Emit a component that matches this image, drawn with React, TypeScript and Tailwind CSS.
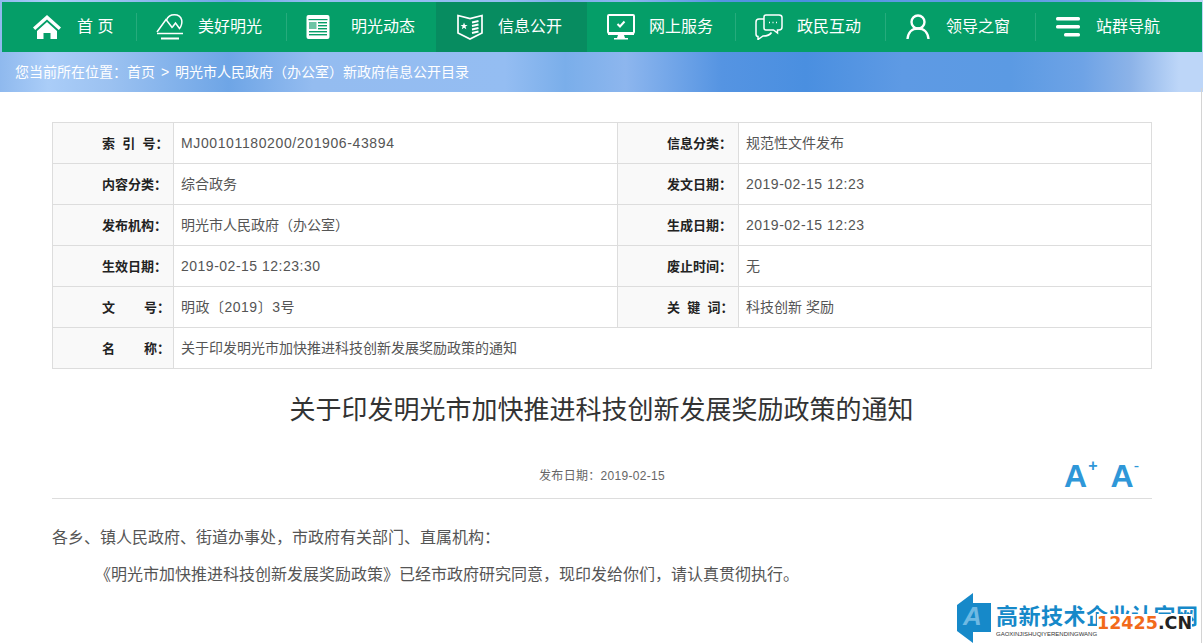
const font = "font-['Liberation_Sans','Noto_Sans_CJK_SC',sans-serif]";

function Home() {
  return (
    <svg width="30" height="26" viewBox="0 0 30 26" fill="white">
      <path d="M15 1 L29 13.5 L26.8 16 L15 5.6 L3.2 16 L1 13.5 Z" />
      <path d="M15 8 L25 17 V25 H18.5 V19 H11.5 V25 H5 V17 Z" />
    </svg>
  );
}
function Mountain() {
  return (
    <svg width="28" height="26" viewBox="0 0 28 26" fill="none" stroke="white" strokeWidth="1.5">
      <path d="M1 18 L10 5.5 L16.5 14" />
      <path d="M10.5 6 C13 -1 24 -1 25.7 6 C26.3 9 25.5 12 23.5 14.5 L19.5 9 L16.5 13" />
      <path d="M1 19.5 H27" />
      <path d="M5 24.5 H23" strokeWidth="2" />
    </svg>
  );
}
function News() {
  return (
    <svg width="24" height="26" viewBox="0 0 24 26">
      <rect x="0.5" y="1" width="23" height="24" rx="2" fill="white" />
      <rect x="2.5" y="5" width="19" height="1.2" fill="#059e68" />
      <rect x="3" y="8" width="7.5" height="7" fill="#6cc4a4" />
      <rect x="12" y="8" width="9" height="1.4" fill="#059e68" />
      <rect x="12" y="11" width="9" height="1.4" fill="#059e68" />
      <rect x="12" y="14" width="9" height="1.4" fill="#059e68" />
      <rect x="3" y="17" width="18" height="1.4" fill="#059e68" />
      <rect x="3" y="20" width="18" height="1.4" fill="#059e68" />
    </svg>
  );
}
function Book() {
  return (
    <svg width="26" height="26" viewBox="0 0 26 26" fill="none" stroke="white" strokeWidth="1.7">
      <path d="M1 1.5 L13 4.5 L25 1.5 V19 L13 25 L1 19 Z" />
      <path d="M7 8.5 L8 11 H10.6 L8.5 12.6 L9.3 15.2 L7 13.7 L4.8 15.2 L5.6 12.6 L3.5 11 H6.1 Z" fill="white" stroke="none" />
      <path d="M15 8.5 L21.5 7 M15 12 L21.5 10.5 M15 15.5 L21.5 14 M15 19 L21.5 17.5" strokeWidth="1.8" />
    </svg>
  );
}
function Monitor() {
  return (
    <svg width="28" height="26" viewBox="0 0 28 26" fill="none">
      <rect x="1" y="1" width="26" height="18" stroke="white" strokeWidth="2" rx="1" />
      <path d="M1 18 H27 V21 H1 Z M11 21 H17 L18 24 H21 V25.5 H7 V24 H10 Z" fill="white" />
      <path d="M10.5 10 L13 12.5 L17.5 7.5" stroke="white" strokeWidth="2" />
    </svg>
  );
}
function Chat() {
  return (
    <svg width="28" height="26" viewBox="0 0 28 26" fill="none" stroke="white" strokeWidth="1.5">
      <path d="M9 5 H4 C2 5 1 6.5 1 8 V20 C1 22 2 22.5 3 22.5 V25.5 L8 22 C12 22 15 21 16.5 18.5" />
      <path d="M9 3 C9 2 10 1 11 1 H24 C26 1 27 2 27 3.5 V13 C27 15 26 16 24 16 H22.5 V19 L18.5 16 H11 C10 16 9 15 9 14 Z" />
      <path d="M14 8.5 H15 M17.5 8.5 H18.5 M21 8.5 H22" strokeWidth="1.6" />
    </svg>
  );
}
function User() {
  return (
    <svg width="24" height="26" viewBox="0 0 24 26" fill="none" stroke="white" strokeWidth="2.4">
      <circle cx="12" cy="8" r="6.5" />
      <path d="M1.5 25 C2 18.5 6 14.5 12 14.5 C18 14.5 22 18.5 22.5 25" />
    </svg>
  );
}
function Menu() {
  return (
    <svg width="24" height="22" viewBox="0 0 24 22" fill="white">
      <rect x="0" y="1" width="24" height="3.6" rx="1.5" />
      <rect x="0" y="9" width="24" height="3.6" rx="1.5" />
      <rect x="8" y="17" width="16" height="3.6" rx="1.5" />
    </svg>
  );
}

const nav: { label: string; icon: React.ReactNode; w: string; pl: string; gap: string; active?: boolean; sep?: boolean }[] = [
  { label: "首 页", icon: <Home />, w: "w-[135px]", pl: "pl-[30px]", gap: "gap-[15px]", sep: true },
  { label: "美好明光", icon: <Mountain />, w: "w-[150px]", pl: "pl-[19px]", gap: "gap-[14px]", sep: true },
  { label: "明光动态", icon: <News />, w: "w-[149px]", pl: "pl-[19px]", gap: "gap-[21px]" },
  { label: "信息公开", icon: <Book />, w: "w-[151px]", pl: "pl-[21px]", gap: "gap-[15px]", active: true },
  { label: "网上服务", icon: <Monitor />, w: "w-[149px]", pl: "pl-[20px]", gap: "gap-[14px]", sep: true },
  { label: "政民互动", icon: <Chat />, w: "w-[150px]", pl: "pl-[19px]", gap: "gap-[14px]", sep: true },
  { label: "领导之窗", icon: <User />, w: "w-[150px]", pl: "pl-[20px]", gap: "gap-[16px]", sep: true },
  { label: "站群导航", icon: <Menu />, w: "w-[166px]", pl: "pl-[20px]", gap: "gap-[16px]" },
];

function Label({ children }: { children: React.ReactNode }) {
  return (
    <div className="w-[121px] shrink-0 bg-[#f9f9f9] border-r border-[#dddddd] text-left pl-[49px] font-bold text-[#222222] text-[13px] leading-[41px] whitespace-pre">
      {children}
    </div>
  );
}
function Value({ children, track = "" }: { children: React.ReactNode; track?: string }) {
  return <div className={`pl-[7px] text-[14px] text-[#555555] leading-[41px] whitespace-pre ${track}`}>{children}</div>;
}

const T5 = "tracking-[0.5px]";
const T6 = "tracking-[0.62px]";
const rows: [string, string, string, string, string, string][] = [
  ["索  引  号：", "MJ00101180200/201906-43894", T6, "信息分类：", "规范性文件发布", ""],
  ["内容分类：", "综合政务", "", "发文日期：", "2019-02-15 12:23", T5],
  ["发布机构：", "明光市人民政府（办公室）", "", "生成日期：", "2019-02-15 12:23", T5],
  ["生效日期：", "2019-02-15 12:23:30", T5, "废止时间：", "无", ""],
  ["文        号：", "明政〔2019〕3号", T5, "关  键  词：", "科技创新 奖励", ""],
];

export default function App() {
  return (
    <div className={`relative w-[1203px] h-[643px] overflow-hidden bg-white flex flex-col ${font}`}>
      <div className="h-[92px] shrink-0 flex flex-col pt-[2px] bg-[linear-gradient(90deg,#8fb9ee_0%,#aacdf8_4%,#9cc2f1_9%,#6ea5e6_19%,#94bcf0_26%,#94bdf2_42%,#7aaeea_47%,#8db6ee_52%,#5594e2_60%,#4a8fe0_67%,#5e9ae4_75%,#5b9ae3_84%,#6ea3e6_90%,#8cb3e8_94%,#bdd6f8_98%)]">
        <div className="h-[50px] ml-[2px] mr-[1px] bg-[#059e68] flex shrink-0">
          {nav.map((n) => (
            <div key={n.label} className={`${n.w} shrink-0 h-full flex items-center ${n.active ? "bg-[#078c60]" : ""}`}>
              <div className={`flex-1 h-[28px] flex items-center ${n.pl} ${n.gap} ${n.sep ? "border-r border-[#26ab7c]" : ""}`}>
                <span className="flex items-center">{n.icon}</span>
                <span className="text-white text-[16px] whitespace-pre">{n.label}</span>
              </div>
            </div>
          ))}
        </div>
        <div className="h-[40px] shrink-0 flex items-center pl-[15px] text-white text-[14px] whitespace-pre">
          您当前所在位置：首页 <span className="mx-[2px]">&gt;</span> 明光市人民政府（办公室）新政府信息公开目录
        </div>
      </div>

      <div className="mx-[52px] mt-[30px] border border-[#dddddd] w-[1100px] shrink-0">
        {rows.map((r) => (
          <div key={r[0]} className="flex h-[41px] border-b border-[#dddddd]">
            <div className="flex w-[565px] border-r border-[#dddddd]">
              <Label>{r[0]}</Label>
              <Value track={r[2]}>{r[1]}</Value>
            </div>
            <div className="flex flex-1">
              <Label>{r[3]}</Label>
              <Value track={r[5]}>{r[4]}</Value>
            </div>
          </div>
        ))}
        <div className="flex h-[40px]">
          <Label>{"名        称："}</Label>
          <Value>关于印发明光市加快推进科技创新发展奖励政策的通知</Value>
        </div>
      </div>

      <h1 className="mt-[21px] text-center text-[26px] leading-[40px] text-[#333333] font-normal">
        关于印发明光市加快推进科技创新发展奖励政策的通知
      </h1>

      <div className="mx-[52px] w-[1100px] h-[49px] mt-[20px] border-b border-[#dddddd] flex items-center relative shrink-0">
        <div className="w-full text-center text-[12px] text-[#666666] tracking-[0.3px] pt-[3px]">发布日期：2019-02-15</div>
        <div className="absolute right-[13px] top-[8px] flex items-start text-[#2f97d8] font-bold text-[32px] leading-[36px]">
          <span>A</span>
          <span className="text-[16px] leading-[18px] font-bold -mt-[1px] ml-[1px]">+</span>
          <span className="ml-[13px]">A</span>
          <span className="text-[16px] leading-[18px] font-normal -mt-[1px]">-</span>
        </div>
      </div>

      <div className="mx-[52px] mt-[25px] text-[16px] leading-[28px] text-[#555555]">各乡、镇人民政府、街道办事处，市政府有关部门、直属机构：</div>
      <div className="mx-[52px] mt-[9px] text-[16px] leading-[28px] text-[#555555] pl-[43px]">《明光市加快推进科技创新发展奖励政策》已经市政府研究同意，现印发给你们，请认真贯彻执行。</div>

      <div className="absolute left-[1201px] top-[88px] w-px h-[555px] bg-[#d4d4d4]" />

      <div className="absolute left-[956px] top-[593px] w-[245px] h-[50px] flex items-start">
        <svg width="36" height="50" viewBox="0 0 36 50" className="shrink-0">
          <path d="M1 12 L17 0 V10 H35 V39 H17 V50 L1 38 Z" fill="#1689c9" />
          <text x="7" y="32" fontSize="26" fontWeight="bold" fontStyle="italic" fill="#6fb9e3" fontFamily="Liberation Sans">A</text>
        </svg>
        <div className="relative ml-[4px] mt-[11px] w-[205px]">
          <div className="text-[#1689c9] text-[22px] leading-[26px] font-bold tracking-[0.5px] whitespace-nowrap h-[26px]">高新技术企业认定网</div>
          <div className="text-[#333333] text-[6px] leading-[8px] whitespace-nowrap">GAOXINJISHUQIYERENDINGWANG</div>
          <div className="absolute left-[101px] top-[10px] h-[18px] bg-white flex items-center text-[17.5px] leading-[18px] font-bold font-['DejaVu_Sans',sans-serif] whitespace-nowrap">
            <span className="text-[#f26a1b]">12425</span>
            <span className="text-[#222222]">.CN</span>
          </div>
        </div>
      </div>
    </div>
  );
}
